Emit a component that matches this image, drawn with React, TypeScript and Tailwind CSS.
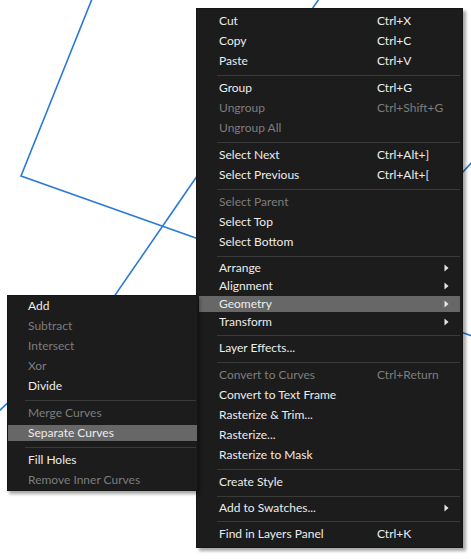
import React from "react";

type ItemProps = {
  label: string;
  shortcut?: string;
  disabled?: boolean;
  arrow?: boolean;
  highlighted?: boolean;
};

const Arrow = () => (
  <svg width="5" height="8" viewBox="0 0 5 8" className="shrink-0">
    <path d="M0.5 0.5 L4.5 4 L0.5 7.5 Z" fill="#e6e6e6" />
  </svg>
);

const MainItem = ({ label, shortcut, disabled, arrow, highlighted }: ItemProps) => (
  <div className={arrow ? "flex h-[18px] items-center" : "flex h-[20px] items-center"}>
    <div
      className={
        highlighted
          ? "mx-[2px] flex h-[16px] w-full items-center bg-[#676767] pl-[20px] pr-[11px]"
          : "mx-[2px] flex h-[16px] w-full items-center pl-[20px] pr-[11px]"
      }
    >
      <span
        className={
          disabled
            ? "w-[158px] shrink-0 whitespace-nowrap text-[#7d7d7d]"
            : "w-[158px] shrink-0 whitespace-nowrap text-[#ececec]"
        }
      >
        {label}
      </span>
      <span
        className={
          disabled
            ? "flex-1 whitespace-nowrap text-[#7d7d7d]"
            : "flex-1 whitespace-nowrap text-[#ececec]"
        }
      >
        {shortcut ?? ""}
      </span>
      {arrow ? <Arrow /> : null}
    </div>
  </div>
);

const SubItem = ({ label, disabled, highlighted }: ItemProps) => (
  <div className="flex h-[20px] items-center">
    <div
      className={
        highlighted
          ? "flex h-[16px] w-full items-center bg-[#676767] pl-[20px]"
          : "flex h-[16px] w-full items-center pl-[20px]"
      }
    >
      <span
        className={
          disabled
            ? "whitespace-nowrap text-[#7d7d7d]"
            : "whitespace-nowrap text-[#ececec]"
        }
      >
        {label}
      </span>
    </div>
  </div>
);

const MainSep = () => (
  <div className="pb-[2px] pt-[4px]">
    <div className="ml-[20px] mr-[2px] h-px bg-[#3a3a3a]" />
  </div>
);

const SubSep = () => (
  <div className="pb-[2px] pt-[4px]">
    <div className="ml-[17px] mr-[1px] h-px bg-[#3a3a3a]" />
  </div>
);

export default function App() {
  return (
    <div className="relative h-[559px] w-[471px] overflow-hidden bg-white font-['Lato',sans-serif] text-[12px] leading-none">
      <svg
        className="absolute left-0 top-0"
        width="471"
        height="559"
        viewBox="0 0 471 559"
      >
        <g stroke="#2a79d6" strokeWidth="1.6" fill="none" strokeLinecap="square">
          <path d="M92 -1 L21 176 L475 337" />
          <path d="M319 -1 L100 317" />
          <path d="M-2 412 L12 399" />
          <path d="M460 175 L474 160" />
        </g>
      </svg>

      {/* Main context menu */}
      <div className="absolute left-[196px] top-[8px] w-[267px] border border-[#151515] bg-[#1c1c1c] pb-[3px] pt-[2px] shadow-[3px_3px_3px_rgba(0,0,0,0.35)]">
        <MainItem label="Cut" shortcut="Ctrl+X" />
        <MainItem label="Copy" shortcut="Ctrl+C" />
        <MainItem label="Paste" shortcut="Ctrl+V" />
        <MainSep />
        <MainItem label="Group" shortcut="Ctrl+G" />
        <MainItem label="Ungroup" shortcut="Ctrl+Shift+G" disabled />
        <MainItem label="Ungroup All" disabled />
        <MainSep />
        <MainItem label="Select Next" shortcut="Ctrl+Alt+]" />
        <MainItem label="Select Previous" shortcut="Ctrl+Alt+[" />
        <MainSep />
        <MainItem label="Select Parent" disabled />
        <MainItem label="Select Top" />
        <MainItem label="Select Bottom" />
        <MainSep />
        <MainItem label="Arrange" arrow />
        <MainItem label="Alignment" arrow />
        <MainItem label="Geometry" arrow highlighted />
        <MainItem label="Transform" arrow />
        <MainSep />
        <MainItem label="Layer Effects..." />
        <MainSep />
        <MainItem label="Convert to Curves" shortcut="Ctrl+Return" disabled />
        <MainItem label="Convert to Text Frame" />
        <MainItem label="Rasterize & Trim..." />
        <MainItem label="Rasterize..." />
        <MainItem label="Rasterize to Mask" />
        <MainSep />
        <MainItem label="Create Style" />
        <MainSep />
        <MainItem label="Add to Swatches..." arrow />
        <MainSep />
        <MainItem label="Find in Layers Panel" shortcut="Ctrl+K" />
      </div>

      {/* Geometry submenu */}
      <div className="absolute left-[7px] top-[295px] w-[191px] border border-[#151515] bg-[#1c1c1c] shadow-[2px_3px_3px_rgba(0,0,0,0.35)]">
        <SubItem label="Add" />
        <SubItem label="Subtract" disabled />
        <SubItem label="Intersect" disabled />
        <SubItem label="Xor" disabled />
        <SubItem label="Divide" />
        <SubSep />
        <SubItem label="Merge Curves" disabled />
        <SubItem label="Separate Curves" highlighted />
        <SubSep />
        <SubItem label="Fill Holes" />
        <SubItem label="Remove Inner Curves" disabled />
      </div>
    </div>
  );
}
